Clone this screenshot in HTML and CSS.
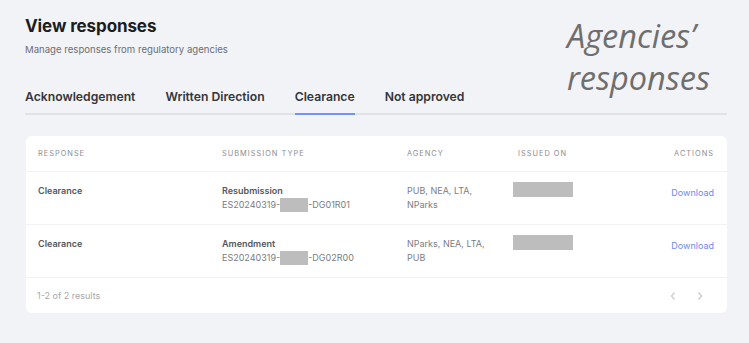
FILE: index.html
```html
<!DOCTYPE html>
<html lang="en">
<head>
<meta charset="utf-8">
<title>View responses</title>
<link rel="stylesheet" href="styles.css">
</head>
<body>
<div class="page">
  <h1 class="title">View responses</h1>
  <p class="subtitle">Manage responses from regulatory agencies</p>
  <div class="annotation">Agencies’<br>responses</div>
  <nav class="tabs">
    <span class="tab">Acknowledgement</span>
    <span class="tab">Written Direction</span>
    <span class="tab active">Clearance</span>
    <span class="tab">Not approved</span>
  </nav>
  <section class="card">
    <div class="row head">
      <div>Response</div>
      <div>Submission type</div>
      <div>Agency</div>
      <div class="issued-h">Issued on</div>
      <div class="right">Actions</div>
    </div>
    <div class="row">
      <div class="strong">Clearance</div>
      <div><div class="strong">Resubmission</div><div class="ref">ES20240319-<span class="mask"></span>-DG01R01</div></div>
      <div class="muted">PUB, NEA, LTA,<br>NParks</div>
      <div><span class="mask date"></span></div>
      <div class="right"><a class="link">Download</a></div>
    </div>
    <div class="row">
      <div class="strong">Clearance</div>
      <div><div class="strong">Amendment</div><div class="ref">ES20240319-<span class="mask"></span>-DG02R00</div></div>
      <div class="muted">NParks, NEA, LTA,<br>PUB</div>
      <div><span class="mask date"></span></div>
      <div class="right"><a class="link">Download</a></div>
    </div>
    <div class="foot">
      <span class="count">1-2 of 2 results</span>
      <div class="pager">
        <svg width="8" height="10" viewBox="0 0 8 10"><polyline points="5.5,1.5 2.5,5 5.5,8.5" fill="none" stroke="#c9cbd0" stroke-width="1.3"/></svg>
        <svg width="8" height="10" viewBox="0 0 8 10"><polyline points="2.5,1.5 5.5,5 2.5,8.5" fill="none" stroke="#c9cbd0" stroke-width="1.3"/></svg>
      </div>
    </div>
  </section>
</div>
</body>
</html>
```

FILE: styles.css
```css
html, body {
  margin: 0;
  padding: 0;
  background: #f2f3f7;
  font-family: Inter, "Noto Sans", Roboto, sans-serif;
}
.page {
  position: relative;
  width: 702px;
  padding: 15px 22px 30px 25px;
}
.title {
  margin: 0;
  font-size: 17px;
  line-height: 22px;
  font-weight: 700;
  color: #1c1d21;
  letter-spacing: -0.1px;
}
.subtitle {
  margin: 6px 0 0;
  font-size: 9.6px;
  line-height: 14px;
  color: #6c6e74;
}
.annotation {
  position: absolute;
  left: 567px;
  top: 15px;
  font-family: "Open Sans", sans-serif;
  font-style: italic;
  font-weight: 400;
  font-size: 32.5px;
  line-height: 42px;
  color: #6e6e6e;
}
.tabs {
  display: flex;
  gap: 30px;
  margin-top: 32px;
  border-bottom: 2px solid #e1e2e6;
}
.tab {
  font-size: 12.2px;
  line-height: 16px;
  font-weight: 600;
  color: #33353b;
  padding-bottom: 8px;
  margin-bottom: -2px;
  border-bottom: 2px solid transparent;
}
.tab.active {
  border-bottom-color: #6b97f0;
}
.card {
  margin-top: 21px;
  margin-left: 1px;
  background: #fff;
  border-radius: 6px;
  overflow: hidden;
}
.row {
  display: grid;
  grid-template-columns: 184px 185px 106px 1fr auto;
  padding: 12px 13px 0 12px;
  height: 53px;
  box-sizing: border-box;
  border-top: 1px solid #f1f2f5;
  font-size: 9px;
  line-height: 14px;
  color: #777980;
}
.row.head {
  border-top: none;
  height: 35px;
  padding-top: 11px;
  font-size: 7.4px;
  letter-spacing: 1px;
  text-transform: uppercase;
  color: #8b8d92;
}
.issued-h {
  padding-left: 5px;
}
.right {
  text-align: right;
}
.strong {
  font-weight: 600;
  color: #55575d;
}
.ref {
  color: #7b7d83;
  display: flex;
  align-items: center;
}
.mask {
  display: inline-block;
  width: 28px;
  height: 14px;
  background: #bdbdbd;
}
.mask.date {
  width: 60px;
  height: 15px;
  margin-top: -2px;
  display: block;
}
.muted {
  color: #7b7d83;
}
.link {
  display: inline-block;
  margin-top: 2px;
  color: #6b8af2;
}
.foot {
  display: flex;
  justify-content: space-between;
  align-items: center;
  height: 36px;
  padding: 0 23px 0 11px;
  border-top: 1px solid #f1f2f5;
  box-sizing: border-box;
}
.count {
  font-size: 9px;
  color: #a6a8ad;
}
.pager {
  display: flex;
  gap: 19px;
}
.pager svg {
  display: block;
}
```
